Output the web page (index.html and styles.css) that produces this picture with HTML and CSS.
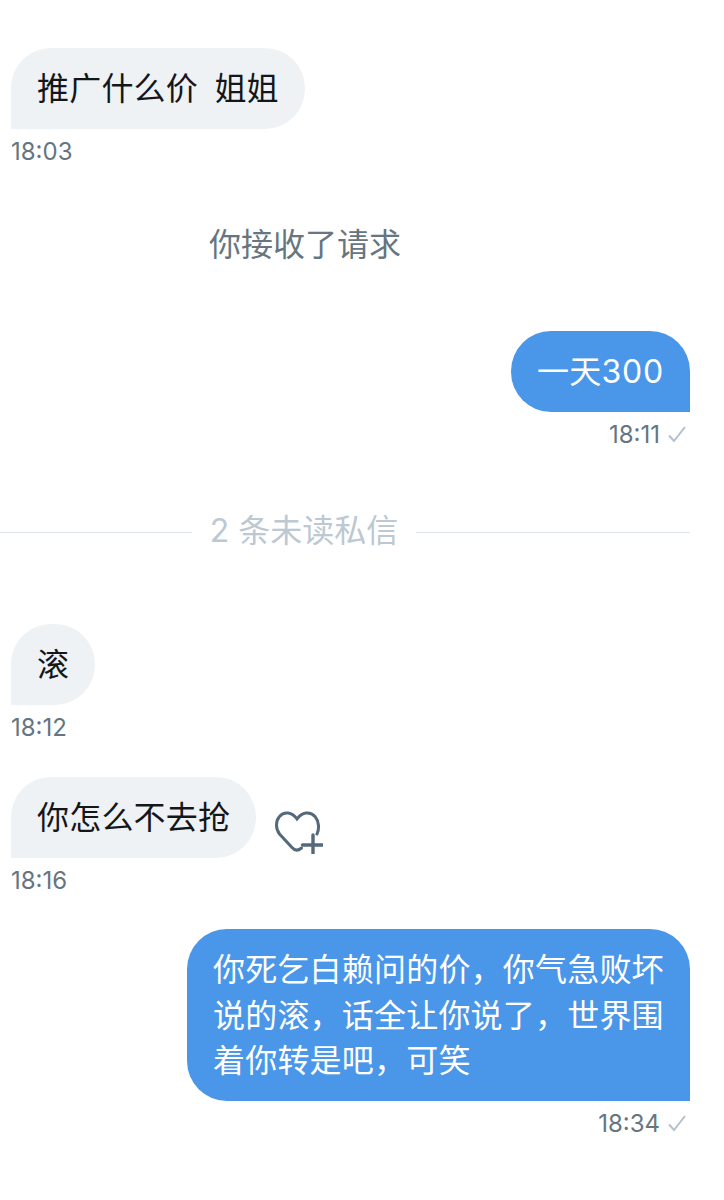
FILE: index.html
```html
<!DOCTYPE html>
<html lang="zh-CN">
<head>
<meta charset="utf-8">
<title>私信</title>
<link rel="stylesheet" href="styles.css">
</head>
<body>
<main class="chat">
  <div class="bubble in spaced">推广什么价  姐姐</div>
  <div class="time">18:03</div>

  <div class="system">你接收了请求</div>

  <div class="bubble out first-out">一天<span class="num">300</span></div>
  <div class="time right">18:11
    <svg class="check" viewBox="0 0 20 18" width="20" height="18" aria-hidden="true"><path d="M2 10.5 L7 16 L18 2"/></svg>
  </div>

  <div class="divider">
    <span class="line short"></span>
    <span class="label">2 条未读私信</span>
    <span class="line long"></span>
  </div>

  <div class="bubble in after-divider">滚</div>
  <div class="time">18:12</div>

  <div class="row">
    <div class="bubble in">你怎么不去抢</div>
    <svg class="heart" viewBox="0 0 48 44" width="48" height="44" aria-hidden="true">
      <path d="M42 24 C44.5 19 44 11 40 6.5 C35 1 27 2 22 9 C17 2 9 1 4.5 6.5 C0.5 11 0.5 19 4.5 24 L17 37.5 C20 41 23 41 26.5 38"/>
      <path class="plus" d="M38 25 V43 M27.5 35 H48"/>
    </svg>
  </div>
  <div class="time">18:16</div>

  <div class="bubble out last-out">你死乞白赖问的价，你气急败坏说的滚，话全让你说了，世界围着你转是吧，可笑</div>
  <div class="time right">18:34
    <svg class="check" viewBox="0 0 20 18" width="20" height="18" aria-hidden="true"><path d="M2 10.5 L7 16 L18 2"/></svg>
  </div>
</main>
</body>
</html>
```

FILE: styles.css
```css
* { box-sizing: border-box; }

html, body {
  margin: 0;
  padding: 0;
  background: #ffffff;
}

.chat {
  display: flex;
  flex-direction: column;
  align-items: flex-start;
  width: 724px;
  height: 1200px;
  padding: 48px 34px 0 11px;
  font-family: Inter, "Noto Sans CJK SC", sans-serif;
  font-size: 32px;
  color: #14171a;
  overflow: hidden;
}

.bubble {
  flex: none;
  max-width: 503px;
  min-height: 81px;
  padding: 18px 26px 17.5px;
  line-height: 45.5px;
  letter-spacing: 0.2px;
  white-space: pre-wrap;
}

.spaced { word-spacing: -1px; }
.num { letter-spacing: 0.8px; }

.in {
  background: #eff2f4;
  border-radius: 40px 40px 40px 0;
}

.out {
  align-self: flex-end;
  background: #4a96e9;
  color: #ffffff;
  border-radius: 40px 40px 0 40px;
}

.first-out { margin-top: 63px; }
.last-out { margin-top: 27px; }
.after-divider { margin-top: 73px; }

.time {
  display: flex;
  align-items: center;
  gap: 7px;
  height: 44px;
  font-size: 24px;
  color: #66757f;
}

.time.right {
  align-self: flex-end;
  padding-right: 3px;
}

.check {
  fill: none;
  stroke: #b4c1cc;
  stroke-width: 2;
}

.system {
  width: 588px;
  margin-top: 49px;
  line-height: 46px;
  text-align: center;
  color: #66757f;
}

.divider {
  display: flex;
  align-items: center;
  align-self: stretch;
  margin: 49px 0 0 -11px;
  height: 46px;
}

.line {
  height: 1px;
  margin-top: 8px;
  background: #dfe5ea;
}

.short { width: 192px; }
.long { flex: 1; }

.label {
  width: 224px;
  text-align: center;
  color: #bcc8d2;
}

.row {
  display: flex;
  align-items: flex-end;
  gap: 19px;
  margin-top: 28px;
}

.heart {
  flex: none;
  margin-bottom: 4px;
  fill: none;
  stroke: #55697a;
  stroke-width: 3;
  stroke-linecap: round;
}

.plus { stroke-width: 3.4; }
```
